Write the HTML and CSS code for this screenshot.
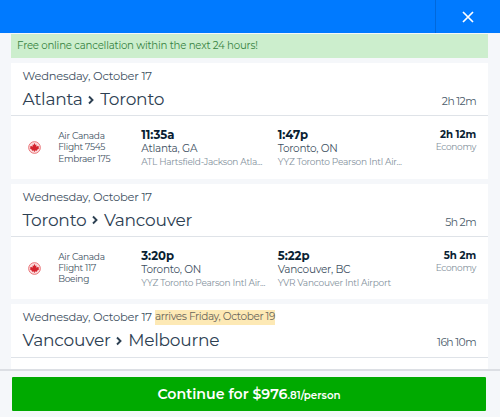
FILE: index.html
```html
<!DOCTYPE html>
<html lang="en">
  <head>
    <meta charset="UTF-8" />
    <meta name="viewport" content="width=device-width, initial-scale=1.0" />
    <title>Flight details</title>
    <link rel="stylesheet" href="styles.css">
  </head>
  <body>
    <svg class="sprite" aria-hidden="true">
      <symbol id="maple" viewBox="0 0 26 26">
        <circle cx="13" cy="13" r="11.7" fill="#fbdcdd" stroke="#e8666b" stroke-width="1.8" />
        <path d="M13 4l2 3.8 2.1-.9-.7 4.6 2.5-2.2.7 1.6 2.7-.3-1.1 2.8 1.1 1.1-4.6 3.5.5 1.5-4.4-.6v2.8h-1.6v-2.8l-4.4.6.5-1.5-4.6-3.5 1.1-1.1-1.1-2.8 2.7.3.7-1.6 2.5 2.2-.7-4.6 2.1.9z" fill="#d4242e" />
      </symbol>
      <symbol id="chevron" viewBox="0 0 6 10">
        <path d="M1 1.5L4.5 5 1 8.5" fill="none" stroke="currentColor" stroke-width="1.9" />
      </symbol>
    </svg>

    <header class="topbar">
      <button class="close" aria-label="Close">
        <svg viewBox="0 0 12 12">
          <path d="M1 1l10 10M11 1L1 11" fill="none" stroke="#fff" stroke-width="1.7" />
        </svg>
      </button>
    </header>

    <main class="content">
      <div class="notice">Free online cancellation within the next 24 hours!</div>

      <section class="slice">
        <div class="slice-header">
          <div class="date">Wednesday, October 17</div>
          <div class="route-row">
            <h2 class="route"><span>Atlanta</span><svg><use href="#chevron" /></svg><span>Toronto</span></h2>
            <span class="total">2h 12m</span>
          </div>
        </div>
        <div class="segment">
          <svg class="logo"><use href="#maple" /></svg>
          <div class="carrier">Air Canada<br />Flight 7545<br />Embraer 175</div>
          <div class="stop">
            <div class="time">11:35a</div>
            <div class="city">Atlanta, GA</div>
            <div class="airport">ATL Hartsfield-Jackson Atla...</div>
          </div>
          <div class="stop">
            <div class="time">1:47p</div>
            <div class="city">Toronto, ON</div>
            <div class="airport">YYZ Toronto Pearson Intl Air...</div>
          </div>
          <div class="duration">
            <strong>2h 12m</strong>
            <span>Economy</span>
          </div>
        </div>
      </section>

      <section class="slice">
        <div class="slice-header">
          <div class="date">Wednesday, October 17</div>
          <div class="route-row">
            <h2 class="route"><span>Toronto</span><svg><use href="#chevron" /></svg><span>Vancouver</span></h2>
            <span class="total">5h 2m</span>
          </div>
        </div>
        <div class="segment">
          <svg class="logo"><use href="#maple" /></svg>
          <div class="carrier">Air Canada<br />Flight 117<br />Boeing</div>
          <div class="stop">
            <div class="time">3:20p</div>
            <div class="city">Toronto, ON</div>
            <div class="airport">YYZ Toronto Pearson Intl Air...</div>
          </div>
          <div class="stop">
            <div class="time">5:22p</div>
            <div class="city">Vancouver, BC</div>
            <div class="airport">YVR Vancouver Intl Airport</div>
          </div>
          <div class="duration">
            <strong>5h 2m</strong>
            <span>Economy</span>
          </div>
        </div>
      </section>

      <section class="slice">
        <div class="slice-header">
          <div class="date">Wednesday, October 17 <span class="arrives">arrives Friday, October 19</span></div>
          <div class="route-row">
            <h2 class="route"><span>Vancouver</span><svg><use href="#chevron" /></svg><span>Melbourne</span></h2>
            <span class="total">16h 10m</span>
          </div>
        </div>
      </section>
    </main>

    <footer class="footer">
      <button class="continue">Continue for $976<small>.81/person</small></button>
    </footer>
  </body>
</html>
```
FILE: styles.css
```css
* {
  box-sizing: border-box;
}
body {
  display: flex;
  flex-direction: column;
  height: 100vh;
  margin: 0;
  overflow: hidden;
  background-color: #f5f7fa;
  color: #3e5061;
  font-family: Montserrat, Inter, sans-serif;
  font-weight: 400;
}
button {
  border: 0;
  padding: 0;
  font-family: inherit;
}
.sprite {
  display: none;
}

.topbar {
  display: flex;
  flex: none;
  justify-content: flex-end;
  height: 33px;
  background-color: #007aff;
}
.close {
  display: flex;
  align-items: center;
  justify-content: center;
  width: 65px;
  border-left: 1px solid #0068dc;
  background: none;
}
.close svg {
  width: 12px;
  height: 12px;
}

.content {
  flex: 1;
  min-height: 0;
  overflow: hidden;
  padding: 1px 12px 0 11px;
}
.notice {
  height: 24px;
  margin-bottom: 5px;
  padding-left: 6px;
  background-color: #cceecd;
  color: #378342;
  font-size: 10.2px;
  letter-spacing: -0.21px;
  line-height: 23px;
  white-space: nowrap;
}

.slice {
  height: 115.7px;
  margin-bottom: 5px;
  background-color: #fff;
}
.slice-header {
  height: 53.2px;
  padding: 5px 12px 0 11.5px;
  border-bottom: 1px solid #dfe3e8;
}
.date {
  display: flex;
  height: 17px;
  font-size: 11.5px;
  letter-spacing: -0.22px;
  line-height: 17px;
  white-space: nowrap;
}
.arrives {
  height: 15px;
  margin: 1px 0 0 3px;
  background-color: #fde9b5;
  color: #69645a;
  font-size: 10.5px;
  letter-spacing: -0.38px;
  line-height: 13px;
}
.route-row {
  display: flex;
  align-items: baseline;
  justify-content: space-between;
}
.route {
  display: flex;
  align-items: center;
  margin: 0;
  color: #2d4052;
  font-size: 17px;
  font-weight: inherit;
  letter-spacing: -0.22px;
  line-height: 28px;
}
.route svg {
  width: 6px;
  height: 10px;
  margin: 1px 5.8px 0;
}
.total {
  color: #4b5c6b;
  font-size: 10.8px;
  letter-spacing: -0.6px;
}

.segment {
  display: grid;
  grid-template-columns: 30.5px 83px 136.5px 130px 1fr;
  padding: 12px 12px 0 16.7px;
}
.logo {
  width: 13px;
  height: 13px;
  margin-top: 13px;
}
.carrier {
  padding-top: 2px;
  font-size: 9px;
  letter-spacing: -0.28px;
  line-height: 11.2px;
}
.stop {
  white-space: nowrap;
}
.time {
  color: #0a1f33;
  font-size: 11.7px;
  font-weight: 700;
  line-height: 14px;
}
.city {
  font-size: 10.5px;
  letter-spacing: -0.25px;
  line-height: 14px;
}
.airport {
  color: #84919c;
  font-size: 9px;
  letter-spacing: -0.24px;
  line-height: 12px;
}
.duration {
  display: flex;
  flex-direction: column;
  align-items: flex-end;
  color: #84919c;
  font-size: 9px;
  letter-spacing: -0.33px;
  line-height: 12px;
}
.duration strong {
  color: #0a1f33;
  font-size: 10.2px;
  font-weight: 700;
  letter-spacing: -0.1px;
  line-height: 13px;
}

.footer {
  flex: none;
  height: 48px;
  padding: 6px 14px 0 12px;
  border-top: 2px solid #dcdfe4;
  background-color: #f5f7fa;
}
.continue {
  width: 100%;
  height: 34px;
  border-radius: 1px;
  background-color: #00aa00;
  color: #fff;
  font-size: 14.2px;
  font-weight: 600;
}
.continue small {
  font-size: 10.3px;
}
```
